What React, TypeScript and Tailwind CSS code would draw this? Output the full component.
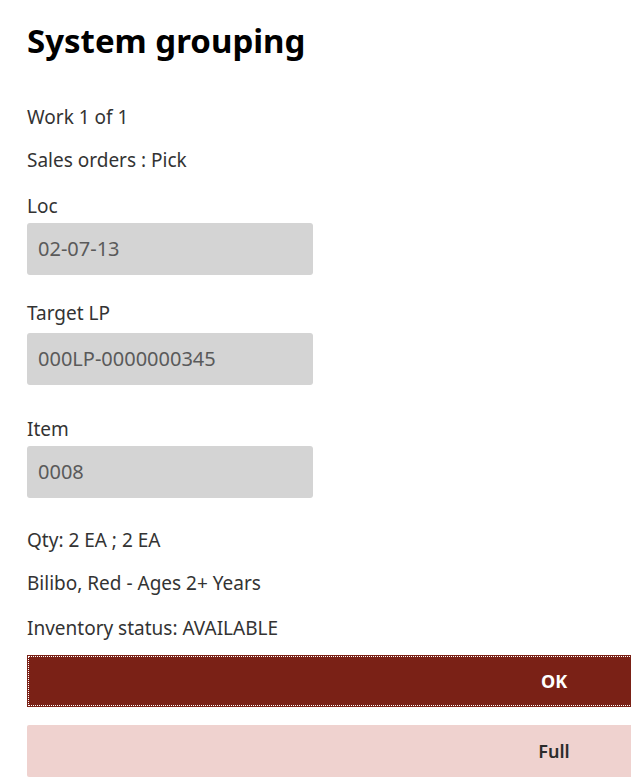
import React from "react";

function Field({ label, value, labelGap }: { label: string; value: string; labelGap: string }) {
  return (
    <div className="flex flex-col">
      <div className="text-[19px] leading-6 text-[#333]">{label}</div>
      <div
        className={`${labelGap} h-[52px] w-[286px] rounded-[3px] bg-[#d4d4d4] px-[11px] flex items-center text-[20px] text-[#5a5a5a]`}
      >
        {value}
      </div>
    </div>
  );
}

export default function App() {
  return (
    <div
      className="w-[631px] h-[784px] overflow-hidden bg-white pl-[27px]"
      style={{ fontFamily: '"Noto Sans", "Open Sans", sans-serif' }}
    >
      <h1 className="mt-[21px] text-[33px] leading-[40px] font-bold text-black">System grouping</h1>
      <div className="mt-[44px] text-[19px] leading-6 text-[#333]">Work 1 of 1</div>
      <div className="mt-[19px] text-[19px] leading-6 text-[#333]">Sales orders : Pick</div>
      <div className="mt-[22px]">
        <Field label="Loc" value="02-07-13" labelGap="mt-[5px]" />
      </div>
      <div className="mt-[26px]">
        <Field label="Target LP" value="000LP-0000000345" labelGap="mt-[8px]" />
      </div>
      <div className="mt-[32px]">
        <Field label="Item" value="0008" labelGap="mt-[5px]" />
      </div>
      <div className="mt-[30px] text-[19px] leading-6 text-[#333]">Qty: 2 EA ; 2 EA</div>
      <div className="mt-[19px] text-[19px] leading-6 text-[#333]">Bilibo, Red - Ages 2+ Years</div>
      <div className="mt-[21px] text-[19px] leading-6 text-[#333]">Inventory status: AVAILABLE</div>
      <button
        type="button"
        className="mt-[15px] block h-[52px] w-[1054px] bg-[#7a2116] p-px"
      >
        <span className="flex h-full w-full items-center justify-center border border-dotted border-white text-[18px] font-bold text-white">
          OK
        </span>
      </button>
      <button
        type="button"
        className="mt-[18px] flex h-[52px] w-[1054px] items-center justify-center rounded-[2px] bg-[#efd2cf] text-[18px] font-semibold text-[#2b2b2b]"
      >
        Full
      </button>
    </div>
  );
}
